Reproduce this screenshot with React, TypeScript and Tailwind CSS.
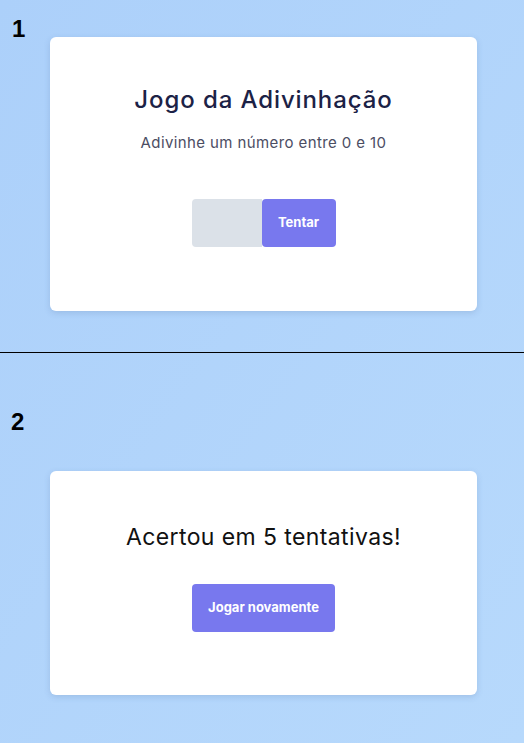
export default function App() {
  return (
    <div className="w-[524px] h-[743px] flex flex-col bg-gradient-to-br from-[#acd0fa] to-[#b7d9fc] font-['Inter',sans-serif]">
      <section className="h-[352px] relative flex flex-col items-start pt-[37px] pl-[50px]">
        <span className="absolute left-[12px] top-[11px] text-[24px] font-bold text-black font-['Liberation_Sans',sans-serif]">1</span>
        <div className="w-[427px] h-[274px] bg-white rounded-[6px] shadow-[0_2px_6px_rgba(60,90,140,0.18)] flex flex-col items-center">
          <h1 className="mt-[45px] text-[24px] font-medium text-[#1c2246] tracking-[0.9px]">Jogo da Adivinhação</h1>
          <p className="mt-[14px] text-[15px] text-[#4b4d63] tracking-[0.4px]">Adivinhe um número entre 0 e 10</p>
          <div className="mt-[44px] flex">
            <input className="w-[70px] h-[48px] bg-[#dbe1e8] rounded-l-[4px] outline-none" />
            <button className="w-[74px] h-[48px] bg-[#7878ee] rounded-[4px] text-white text-[13px] font-bold">Tentar</button>
          </div>
        </div>
      </section>
      <div className="h-px bg-black" />
      <section className="flex-1 relative flex flex-col items-start pt-[118px] pl-[50px]">
        <span className="absolute left-[11px] top-[51px] text-[24px] font-bold text-black font-['Liberation_Sans',sans-serif]">2</span>
        <div className="w-[427px] h-[224px] bg-white rounded-[6px] shadow-[0_2px_6px_rgba(60,90,140,0.18)] flex flex-col items-center">
          <p className="mt-[49px] text-[23px] text-[#111] tracking-[0.4px]">Acertou em 5 tentativas!</p>
          <button className="mt-[29px] w-[143px] h-[48px] bg-[#7878ee] rounded-[4px] text-white text-[13px] font-bold">Jogar novamente</button>
        </div>
      </section>
    </div>
  )
}
